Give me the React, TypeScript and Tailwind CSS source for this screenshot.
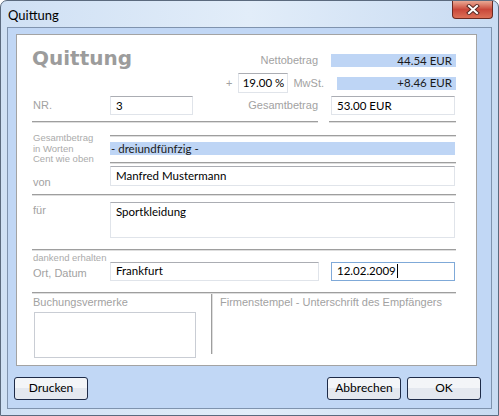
import React from "react";

const ui = "font-['Lato','Liberation_Sans',Arial,sans-serif]";
const lbl = "font-['Liberation_Sans',Arial,sans-serif] text-[11px] text-[#a2a2a2]";
const small = "font-['Liberation_Sans',Arial,sans-serif] text-[9.5px] text-[#ababab]";
const box = "flex border bg-white text-[11.5px] text-black " + ui;
const grayBorder = "border-[#e0e4ea] border-t-[#abadb3]";
const field = box + " items-center pl-[5px] " + grayBorder;
const bar = "flex items-center bg-[#bed5f5] text-[11.5px] text-[#1a1a1a] " + ui;

function Groove({ className = "" }: { className?: string }) {
  return <div className={"h-[2px] border-t border-[#9e9e9e] border-b border-b-[#dedede] " + className} />;
}

function WinButton({ children }: { children: React.ReactNode }) {
  return (
    <button
      type="button"
      className={
        "h-[23px] w-[74px] rounded-[3px] border border-[#1e2b48] bg-gradient-to-b from-[#f3f5f8] from-50% to-[#e4e8ef] to-50% text-[12px] text-black " +
        ui
      }
    >
      {children}
    </button>
  );
}

export default function App() {
  return (
    <div className="h-[416px] w-[499px] overflow-hidden bg-white">
      <div className="flex h-full flex-col rounded-t-[7px] border border-[#5b6a7e] bg-gradient-to-r from-[#cfe0f4] via-[#e2edf9] to-[#c8dbf2]">
        {/* title bar */}
        <div className="flex h-[26px] items-start justify-between pl-[7px]">
          <span className={"mt-[5px] text-[13px] text-black " + ui}>Quittung</span>
          <div className="mr-[5px] flex h-[18px] w-[41px] items-center justify-center rounded-b-[4px] border border-t-0 border-[#6b2a22] bg-gradient-to-b from-[#e9a894] via-[#c9473a] to-[#dc7058]">
            <svg width="14" height="11" viewBox="0 0 14 11">
              <path d="M3 2 L11 9 M11 2 L3 9" stroke="#5a2a24" strokeWidth="4" strokeLinecap="square" />
              <path d="M3 2 L11 9 M11 2 L3 9" stroke="#ffffff" strokeWidth="2" strokeLinecap="square" />
            </svg>
          </div>
        </div>

        {/* client area */}
        <div className="mx-[6px] flex flex-1 flex-col border border-[#7f93ae] bg-[#c1d7f5]">
          <div className="ml-[8px] mr-[14px] mt-[6px] border border-[#a3a3a3] bg-white pb-[7px] pl-[15px] pr-[20px]">
            {/* top block */}
            <div className="flex justify-between">
              <div className="flex w-[161px] flex-col">
                <div className="mt-[11px] h-[24px] font-['DejaVu_Sans',Verdana,sans-serif] text-[20px] font-bold leading-[24px] text-[#9c9c9c]">
                  Quittung
                </div>
                <div className="mt-[26px] flex h-[19px] items-center">
                  <span className={"w-[78px] pl-[1px] " + lbl}>NR.</span>
                  <div className={"h-[19px] w-[83px] " + field}>3</div>
                </div>
              </div>

              <div className="flex w-[230px] flex-col">
                <div className="mt-[19px] flex h-[13px] items-center">
                  <span className={"flex-1 text-right " + lbl}>Nettobetrag</span>
                  <div className={"ml-[13px] h-[13px] w-[125px] justify-end pr-[4px] " + bar}>44.54 EUR</div>
                </div>
                <div className="mt-[6px] flex h-[20px] items-center">
                  <div className="flex flex-1 items-center justify-end">
                    <span className={lbl}>+</span>
                    <div className={"ml-[6px] h-[20px] w-[50px] items-center justify-center " + box + " " + grayBorder}>
                      19.00 %
                    </div>
                    <span className={"ml-[5px] " + lbl}>MwSt.</span>
                  </div>
                  <div className={"ml-[13px] h-[13px] w-[125px] justify-end pr-[4px] " + bar}>+8.46 EUR</div>
                </div>
                <div className="mt-[3px] flex h-[19px] items-center">
                  <span className={"flex-1 text-right " + lbl}>Gesamtbetrag</span>
                  <div className={"ml-[13px] h-[19px] w-[124px] " + field}>53.00 EUR</div>
                  <div className="w-[1px]" />
                </div>
              </div>
            </div>

            <div className="mt-[6px] flex gap-[11px]">
              <Groove className="flex-1" />
              <Groove className="w-[127px]" />
            </div>

            {/* amount in words / von */}
            <div className="flex">
              <div className="flex w-[78px] flex-col pl-[1px]">
                <div className={"mt-[10px] leading-[10.5px] " + small}>
                  Gesamtbetrag
                  <br />
                  in Worten
                  <br />
                  Cent wie oben
                </div>
                <span className={"mt-[11px] leading-[13px] " + lbl}>von</span>
              </div>
              <div className="flex flex-1 flex-col">
                <Groove className="mt-[12px]" />
                <div className={"mt-[5px] h-[13px] w-[345px] pl-[1px] " + bar}>- dreiundfünfzig -</div>
                <Groove className="mt-[7px]" />
                <div className={"mt-[2px] h-[20px] w-[345px] " + field}>Manfred Mustermann</div>
              </div>
            </div>

            <Groove className="mt-[5px]" />

            {/* für */}
            <div className="mt-[6px] flex">
              <span className={"w-[78px] pl-[1px] pt-[2px] leading-[13px] " + lbl}>für</span>
              <div className={"h-[36px] w-[345px] items-start pl-[5px] pt-[2px] leading-[14px] " + box + " " + grayBorder}>
                Sportkleidung
              </div>
            </div>

            <Groove className="mt-[11px]" />

            {/* Ort, Datum */}
            <div className="flex">
              <div className="flex w-[78px] flex-col pl-[1px]">
                <span className={"mt-[2px] leading-[10px] " + small}>dankend erhalten</span>
                <span className={"mt-[3px] text-[11.5px] leading-[14px] " + lbl}>Ort, Datum</span>
              </div>
              <div className="mt-[11px] flex flex-1 gap-[12px]">
                <div className={"h-[19px] w-[209px] " + field}>Frankfurt</div>
                <div className={"h-[19px] w-[124px] items-center pl-[5px] border-[#7fa9d8] " + box}>
                  12.02.2009
                  <span className="ml-[1px] h-[14px] w-[1px] bg-black" />
                </div>
              </div>
            </div>

            <Groove className="mt-[11px]" />

            {/* bottom boxes */}
            <div className="flex">
              <div className="flex w-[179px] flex-col pl-[1px]">
                <span className={"mt-[1px] leading-[14px] " + lbl}>Buchungsvermerke</span>
                <div className="ml-[1px] mt-[3px] h-[46px] w-[162px] border border-[#c9cdd4]" />
              </div>
              <div className="h-[60px] w-[2px] border-l border-[#9e9e9e] border-r border-r-[#dedede]" />
              <span className={"mt-[1px] pl-[7px] leading-[14px] " + lbl}>
                Firmenstempel - Unterschrift des Empfängers
              </span>
            </div>
          </div>

          {/* buttons */}
          <div className="ml-[6px] mr-[10px] mt-[11px] flex">
            <WinButton>Drucken</WinButton>
            <div className="flex-1" />
            <WinButton>Abbrechen</WinButton>
            <div className="w-[6px]" />
            <WinButton>OK</WinButton>
          </div>
        </div>
        <div className="h-[6px]" />
      </div>
    </div>
  );
}
